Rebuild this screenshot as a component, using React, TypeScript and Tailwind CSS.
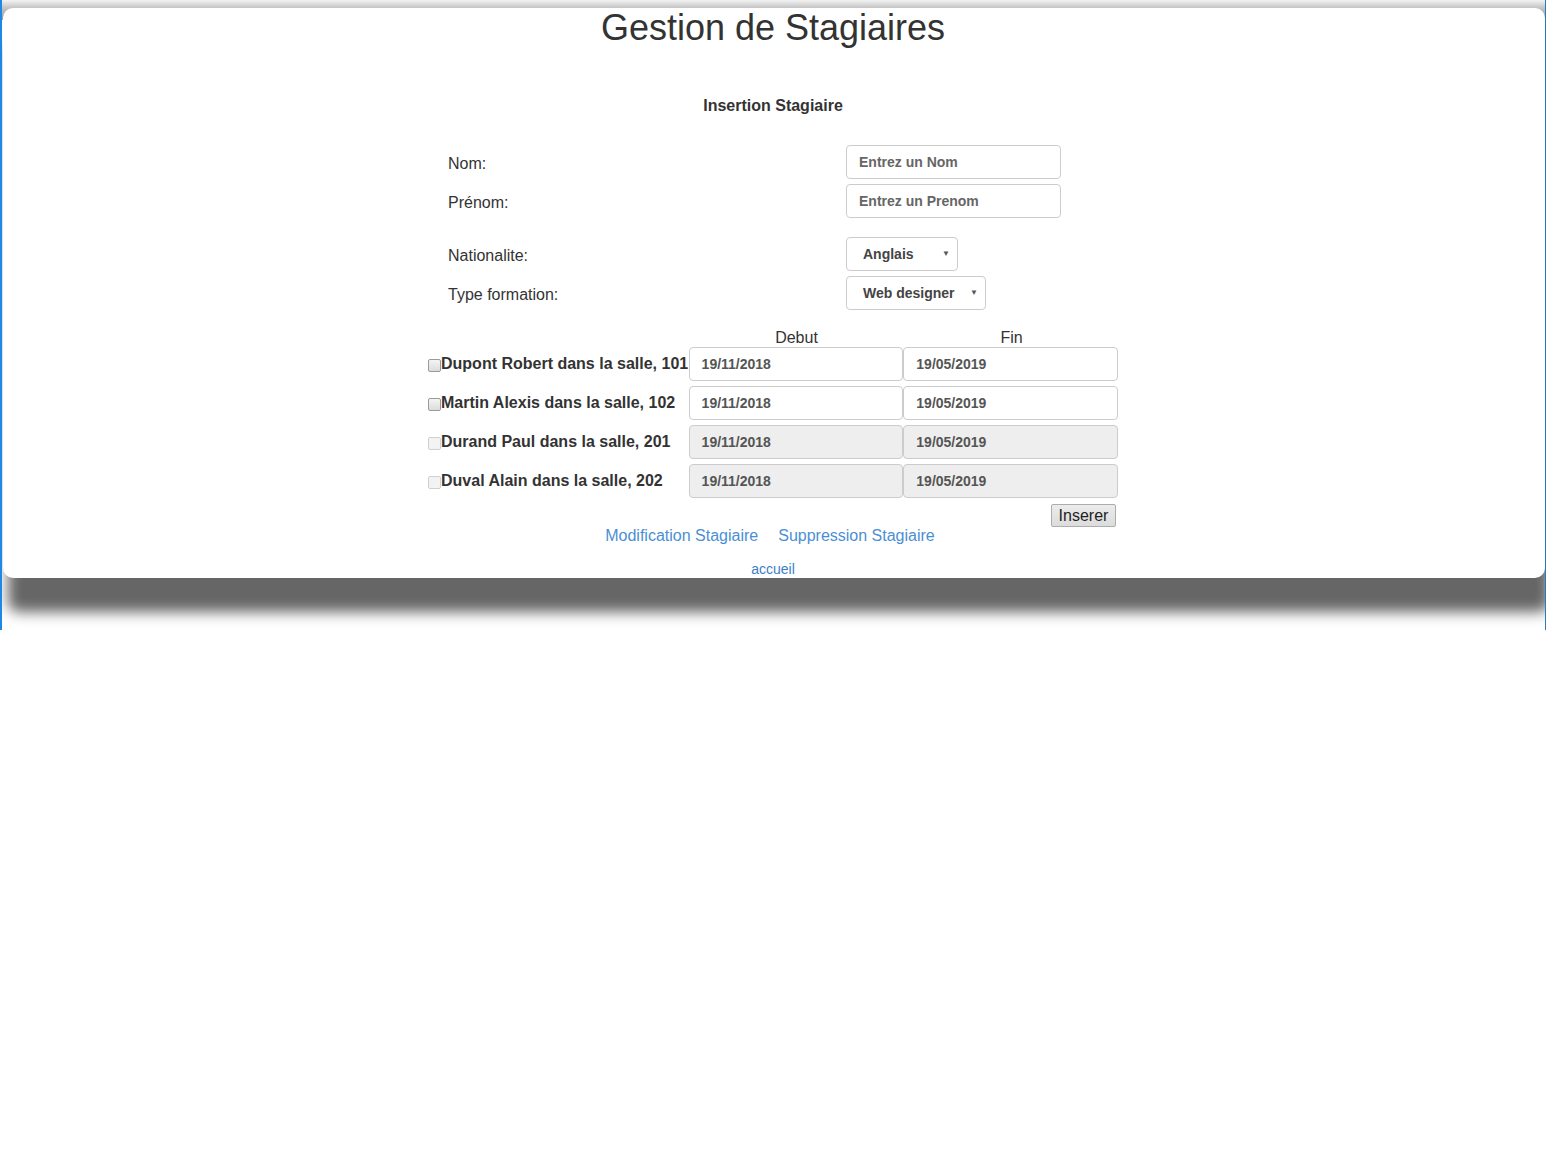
import React from "react";

const rows = [
  { name: "Dupont Robert dans la salle, 101", enabled: true },
  { name: "Martin Alexis dans la salle, 102", enabled: true },
  { name: "Durand Paul dans la salle, 201", enabled: false },
  { name: "Duval Alain dans la salle, 202", enabled: false },
];

function Checkbox({ enabled }: { enabled: boolean }) {
  return (
    <span
      className={
        enabled
          ? "inline-block w-[13px] h-[13px] rounded-[2px] border border-[#9a9a9a] bg-[linear-gradient(to_bottom,#f4f4f4,#dcdcdc)] shrink-0 mt-[2px]"
          : "inline-block w-[13px] h-[13px] rounded-[2px] border border-[#d0d0d0] bg-[#f3f3f3] shrink-0 mt-[2px]"
      }
    />
  );
}

function DateBox({ value, enabled }: { value: string; enabled: boolean }) {
  return (
    <div
      className={
        (enabled ? "bg-white " : "bg-[#eeeeee] ") +
        "w-[215px] h-[34px] rounded-[4px] border border-[#cccccc] flex items-center pl-[12px] text-[14px] font-bold text-[#555555]"
      }
    >
      {value}
    </div>
  );
}

export default function App() {
  return (
    <div
      className="h-[630px] border-l-2 border-r border-l-[#1e88e5] border-r-[#2a78c0] bg-[linear-gradient(to_bottom,#f3f3f3_0px,#c4c4c4_8px,#9c9c9c_20px,#ffffff_20px)] overflow-hidden"
      style={{ fontFamily: '"Liberation Sans", Arial, Helvetica, sans-serif' }}
    >
      <div className="ml-px mt-[8px] h-[570px] rounded-[10px] bg-white shadow-[5px_34px_14px_#666666] text-[#333333] pr-[2px]">
        <h1 className="text-center text-[36px] leading-[40px] font-normal">
          Gestion de Stagiaires
        </h1>
        <h2 className="text-center text-[16px] leading-[22px] font-bold mt-[47px]">
          Insertion Stagiaire
        </h2>

        <div className="w-[690px] mx-auto mt-[28px]">
          <div className="pl-[20px] grid grid-cols-[398px_1fr] gap-y-[5px] items-center">
            <div className="text-[16px] pt-[3px]">Nom:</div>
            <div className="w-[215px] h-[34px] rounded-[4px] border border-[#cccccc] flex items-center pl-[12px] text-[14px] font-bold text-[#666666]">
              Entrez un Nom
            </div>
            <div className="text-[16px] pt-[3px]">Prénom:</div>
            <div className="w-[215px] h-[34px] rounded-[4px] border border-[#cccccc] flex items-center pl-[12px] text-[14px] font-bold text-[#666666]">
              Entrez un Prenom
            </div>
            <div className="text-[16px] pt-[3px] mt-[14px]">Nationalite:</div>
            <div className="mt-[14px] w-[112px] h-[34px] rounded-[4px] border border-[#cccccc] flex items-center justify-between pl-[16px] pr-[7px] text-[14px] font-bold text-[#444444]">
              <span>Anglais</span>
              <span className="text-[8px] text-[#555555]">▼</span>
            </div>
            <div className="text-[16px] pt-[3px]">Type formation:</div>
            <div className="w-[140px] h-[34px] rounded-[4px] border border-[#cccccc] flex items-center justify-between pl-[16px] pr-[7px] text-[14px] font-bold text-[#444444]">
              <span>Web designer</span>
              <span className="text-[8px] text-[#555555]">▼</span>
            </div>
          </div>

          <div className="mt-[18px] grid grid-cols-[261px_215px_215px] text-[16px] leading-[19px]">
            <div />
            <div className="text-center">Debut</div>
            <div className="text-center">Fin</div>
          </div>

          <div className="flex flex-col gap-[5px]">
            {rows.map((r) => (
              <div key={r.name} className="flex items-center">
                <div className="w-[261px] flex items-center text-[16px] font-bold text-[#333333]">
                  <Checkbox enabled={r.enabled} />
                  <span>{r.name}</span>
                </div>
                <DateBox value="19/11/2018" enabled={r.enabled} />
                <DateBox value="19/05/2019" enabled={r.enabled} />
              </div>
            ))}
          </div>

          <div className="flex justify-end pr-[2px] mt-[6px]">
            <button className="w-[65px] h-[23px] border border-[#adadad] rounded-[2px] bg-[linear-gradient(to_bottom,#ececec,#dcdcdc)] text-[16px] leading-[20px] text-[#222222]">
              Inserer
            </button>
          </div>
        </div>

        <div className="flex justify-center gap-[20px] text-[16px] leading-[18px] text-[#4a8fd4] -ml-[6px]">
          <span>Modification Stagiaire</span>
          <span>Suppression Stagiaire</span>
        </div>
        <div className="text-center text-[14px] leading-[16px] text-[#3a7fc6] mt-[16px]">
          accueil
        </div>
      </div>
    </div>
  );
}
